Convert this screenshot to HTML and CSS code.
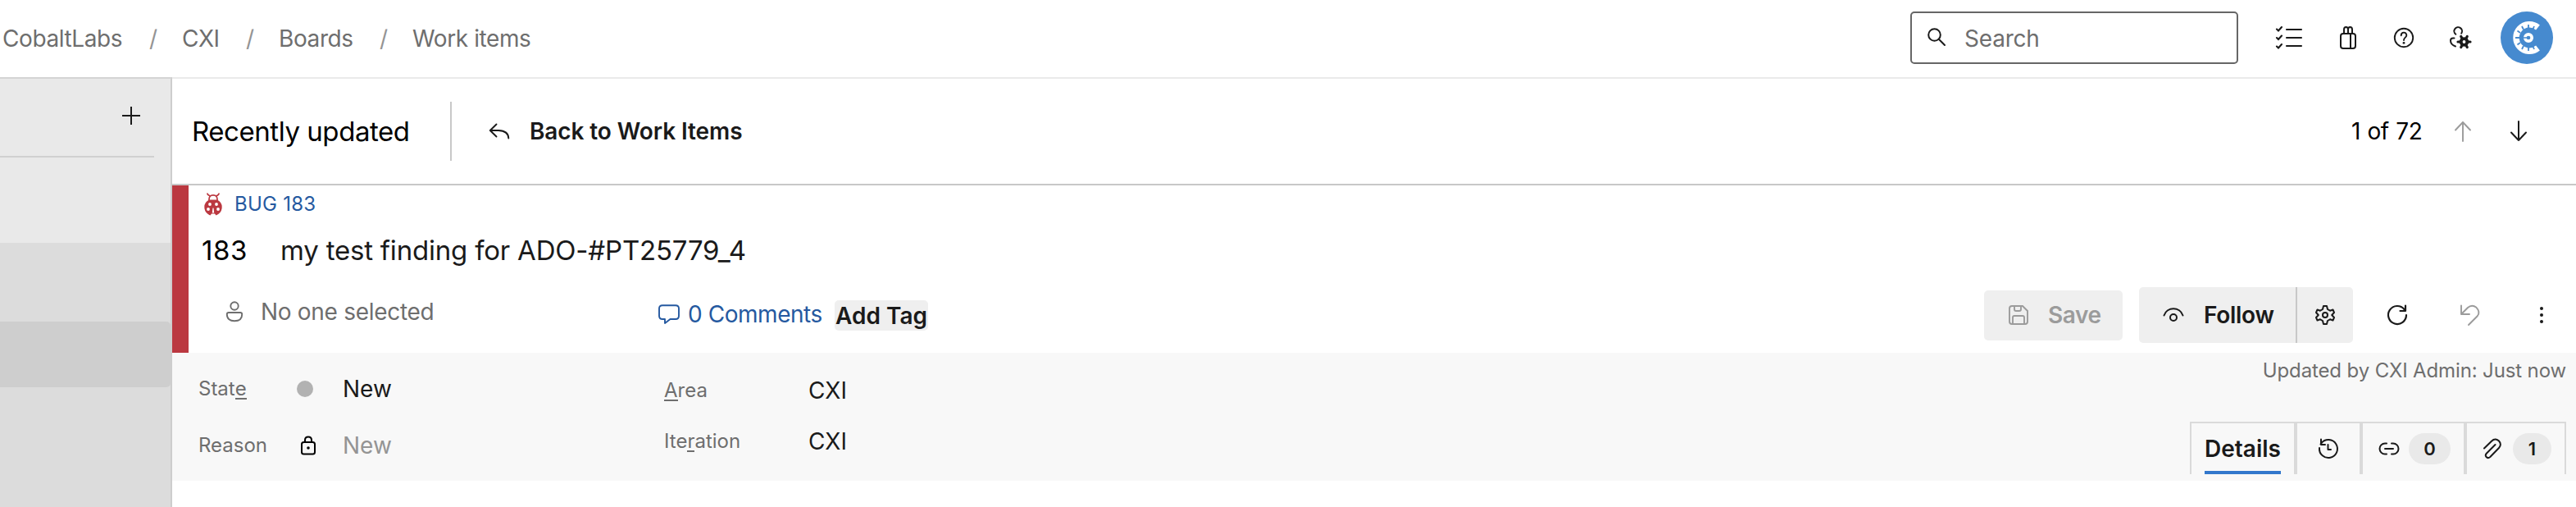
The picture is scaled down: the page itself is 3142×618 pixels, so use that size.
FILE: index.html
```html
<!DOCTYPE html>
<html lang="en">
<head>
<meta charset="utf-8">
<title>Bug 183</title>
<link rel="stylesheet" href="styles.css">
</head>
<body>
<header class="topbar">
  <nav class="crumbs">
    <a class="crumb crumb-org">CobaltLabs</a><span class="slash">/</span>
    <a class="crumb crumb-project">CXI</a><span class="slash">/</span>
    <a class="crumb crumb-hub">Boards</a><span class="slash">/</span>
    <a class="crumb crumb-page">Work items</a>
  </nav>
  <div class="search">
    <svg width="24" height="24" viewBox="0 0 24 24" fill="none" stroke="#1a1a1a" stroke-width="2" stroke-linecap="round"><circle cx="8.500" cy="8.500" r="7.300"/><path d="M13.800 13.800 21 21"/></svg>
    <span>Search</span>
  </div>
  <div class="top-icons">
    <svg class="ti-list" width="34" height="30" viewBox="0 0 34 30" fill="none" stroke="#1a1a1a" stroke-width="2.1" stroke-linecap="round"><path d="M2 4.5 4 6.5 8 2M2 15 4 17 8 12.500M2 25.500 4 27.500 8 23M14 5H32M14 15H32M14 25H32"/></svg>
    <svg class="ti-bag" width="22" height="30" viewBox="0 0 22 30" fill="none" stroke="#1a1a1a" stroke-width="2"><rect x="2" y="10" width="18" height="18" rx="3"/><path d="M14 10V28M6 10V5Q6 2 8.500 2Q11 2 11 5V10M11 5Q11 2 13.500 2Q16 2 16 5V10"/></svg>
    <svg class="ti-help" width="26" height="26" viewBox="0 0 26 26" fill="none" stroke="#1a1a1a" stroke-width="1.900"><circle cx="13" cy="13" r="11.200"/><path d="M9.700 10.200C9.700 5.500 16.300 5.500 16.300 10C16.300 12.700 13 12.700 13 16" stroke-linecap="round"/><circle cx="13" cy="19.300" r="1.400" fill="#1a1a1a" stroke="none"/></svg>
    <svg class="ti-user" width="28" height="28" viewBox="0 0 28 28" fill="none" stroke="#1a1a1a" stroke-width="2" stroke-linecap="round"><path d="M8.300 9.800A4.800 4.800 0 1 1 15.200 8.700M6.500 14.500H5Q2 14.500 2 17.500Q2 22.500 8 24.500"/><circle cx="18.500" cy="19" r="5.800" fill="#1a1a1a" stroke="none"/><path d="M11 19H26M14.750 12.500 22.250 25.500M22.250 12.500 14.750 25.500" stroke-width="3.200"/><circle cx="18.500" cy="19" r="1.900" fill="#fff" stroke="none"/></svg>
    <svg class="avatar" width="64" height="64" viewBox="0 0 64 64"><circle cx="32" cy="32" r="32" fill="#468acf"/><path d="M45.500 19.500A16.200 16.200 0 1 0 45.500 44.500" fill="none" stroke="#fff" stroke-width="7.500"/><path d="M34 16V20M26 18 28 22M20.500 23.500 24 26M18 32H23M20.500 40.500 24 38M26 46 28 42M34 48V44M41 18 39.500 21.500M41 46 39.500 42.500" stroke="#468acf" stroke-width="1.800"/><circle cx="34" cy="32" r="4.200" fill="none" stroke="#fff" stroke-width="3.700"/><path d="M28 32H32" stroke="#468acf" stroke-width="1.500"/></svg>
  </div>
</header>
<div class="shell">
  <aside class="sidebar">
    <div class="side-top">
      <svg width="24" height="24" viewBox="0 0 24 24" stroke="#1a1a1a" stroke-width="2"><path d="M1 12H23M12 1V23"/></svg>
    </div>
    <div class="side-links"></div>
    <div class="side-group"><div class="side-active"></div></div>
  </aside>
  <main class="main">
    <div class="listbar">
      <h1 class="list-title">Recently updated</h1>
      <a class="back">
        <svg width="26" height="20" viewBox="0 0 26 20" fill="none" stroke="#1a1a1a" stroke-width="1.900" stroke-linecap="round" stroke-linejoin="round"><path d="M9.500 1.500 1.800 9 9.500 16.500M2 9H12Q24 9.500 24.300 18.500"/></svg>
        <span class="back-text">Back to Work Items</span>
      </a>
      <span class="pager">1 of 72</span>
      <svg class="arrow" width="22" height="26" viewBox="0 0 22 26" fill="none" stroke="#9b9b9b" stroke-width="1.900" stroke-linecap="round" stroke-linejoin="round"><path d="M11 25V2M2 11.500 11 2 20 11.500"/></svg>
      <svg class="arrow arrow-down" width="22" height="26" viewBox="0 0 22 26" fill="none" stroke="#1a1a1a" stroke-width="2" stroke-linecap="round" stroke-linejoin="round"><path d="M11 1V24M2 14.500 11 24 20 14.500"/></svg>
    </div>
    <section class="item-head">
      <div class="kind">
        <svg width="22" height="28" viewBox="0 0 22 28"><path d="M4 1Q4 2.500 7.500 4M18 1Q18 2.500 14.500 4M6 9.500Q5.500 2.800 11 2.800Q16.500 2.800 16 9.500" fill="none" stroke="#bb3840" stroke-width="1.700" stroke-linecap="round"/><path d="M6 8.500H16Q21.700 11.500 21.700 17.300Q21.700 24.500 14.500 27.600L13 25.500H9L7.500 27.600Q.300 24.500 .300 17.300Q.300 11.500 6 8.500Z" fill="#bb3840"/><g fill="#fff"><circle cx="7" cy="14" r="1.900"/><circle cx="15" cy="14" r="1.900"/><circle cx="5" cy="20" r="1.900"/><circle cx="17" cy="20" r="1.900"/><path d="M10.500 18.500H11.500L12.200 24.500H9.800Z"/></g></svg>
        <a class="kind-text">BUG 183</a>
      </div>
      <div class="title-row"><span class="item-id">183</span><span class="item-title">my test finding for ADO-#PT25779_4</span></div>
      <div class="tools">
        <svg class="person" width="22" height="26" viewBox="0 0 22 26" fill="none" stroke="#6e6e6e" stroke-width="1.900"><circle cx="11" cy="6" r="4.700"/><path d="M4 14H18Q20.200 14 20.200 16.200C20.200 21.500 16.500 24.200 11 24.200S1.800 21.500 1.800 16.200Q1.800 14 4 14Z"/></svg>
        <span class="assignee">No one selected</span>
        <a class="comments">
          <svg width="26" height="24" viewBox="0 0 26 24" fill="none" stroke="#2559a0" stroke-width="1.900" stroke-linejoin="round"><path d="M5 1.200H21Q25 1.200 25 5V14Q25 18 21 18H14.500L8 23V18H5Q1 18 1 14V5Q1 1.200 5 1.200Z"/></svg>
          <span class="comments-text">0 Comments</span>
        </a>
        <button class="add-tag"><span>Add Tag</span></button>
        <button class="save">
          <svg width="24" height="24" viewBox="0 0 24 24" fill="none" stroke="#9b9b9b" stroke-width="1.900"><path d="M4 1H17L23 7V20Q23 23 20 23H4Q1 23 1 20V4Q1 1 4 1ZM7 1V5Q7 7 9 7H13Q15 7 15 5V1M5 23V15Q5 13 7 13H17Q19 13 19 15V23"/></svg>
          <span class="save-text">Save</span>
        </button>
        <div class="follow">
          <svg width="26" height="18" viewBox="0 0 26 18" fill="none" stroke="#1a1a1a" stroke-width="2" stroke-linecap="round"><path d="M1.500 9.500C5-1.500 21-1.500 24.500 9.500"/><circle cx="13" cy="12" r="4"/></svg>
          <span class="follow-text">Follow</span>
          <span class="follow-gear"><svg width="24" height="24" viewBox="0 0 24 24" fill="none" stroke="#1a1a1a" stroke-width="2" stroke-linejoin="round"><path d="M10 1H14L15 5 18 6.700 21.500 5.500 23 9 20.200 12 23 15 21.500 18.500 18 17.300 15 19 14 23H10L9 19 6 17.300 2.500 18.500 1 15 3.800 12 1 9 2.500 5.500 6 6.700 9 5Z"/><circle cx="12" cy="12" r="3"/></svg></span>
        </div>
        <svg class="refresh" width="26" height="26" viewBox="0 0 26 26" fill="none" stroke="#1a1a1a" stroke-width="2.200" stroke-linecap="round" stroke-linejoin="round"><path d="M24 13A11 11 0 1 1 21.500 6L23 7.800M23 1.500V8H16.500"/></svg>
        <svg class="undo" width="26" height="26" viewBox="0 0 26 26" fill="none" stroke="#9b9b9b" stroke-width="1.900" stroke-linecap="round" stroke-linejoin="round"><path d="M2 1.500V12H12M2 12 10 4Q15-.500 20.500 3.800Q26 9.500 21.500 14.500L11 25"/></svg>
        <svg class="more" width="6" height="22" viewBox="0 0 6 22" fill="#1a1a1a"><circle cx="3" cy="3" r="2"/><circle cx="3" cy="11" r="2"/><circle cx="3" cy="19" r="2"/></svg>
      </div>
    </section>
    <section class="fields">
      <div class="field-col">
        <div class="field field-state"><label>Stat<u>e</u></label><i class="dot"></i><span class="value state-value">New</span></div>
        <div class="field field-reason"><label>Reason</label><svg class="lock" width="20" height="24" viewBox="0 0 20 24" fill="none" stroke="#000" stroke-width="2"><rect x="2" y="8" width="16" height="14.500" rx="2.500"/><path d="M6 8V5.500Q6 1.500 10 1.500Q14 1.500 14 5.500V8"/><circle cx="10" cy="15" r="1.800" fill="#000" stroke="none"/></svg><span class="value muted state-value">New</span></div>
      </div>
      <div class="field-col field-col-area">
        <div class="field field-area"><label><u>A</u>rea</label><span class="value">CXI</span></div>
        <div class="field field-iter"><label>Ite<u>r</u>ation</label><span class="value">CXI</span></div>
      </div>
      <div class="meta">
        <div class="updated">Updated by CXI Admin: Just now</div>
        <div class="tabs">
          <a class="tab tab-details"><span>Details</span></a>
          <a class="tab tab-history"><svg width="26" height="26" viewBox="0 0 26 26" fill="none" stroke="#1a1a1a" stroke-width="2" stroke-linecap="round" stroke-linejoin="round"><path d="M2 12A11 11 0 1 0 4.500 6L3.500 7.500M4 1.500V8H9M12.500 8V14H16"/></svg></a>
          <a class="tab tab-links"><svg width="26" height="16" viewBox="0 0 26 16" fill="none" stroke="#1a1a1a" stroke-width="2" stroke-linecap="round"><path d="M10 1.500H8A6.500 6.500 0 0 0 8 14.500H10M16 1.500H18A6.500 6.500 0 0 1 18 14.500H16M8 8H18"/></svg><b class="badge">0</b></a>
          <a class="tab tab-files"><svg width="24" height="26" viewBox="0 0 24 26" fill="none" stroke="#1a1a1a" stroke-width="2" stroke-linecap="round" stroke-linejoin="round"><path d="M2 12.500 11 3.700C14.500 .300 18 1.500 20 3.500C22.500 6 22.500 9.500 20 12L9.300 23C5.500 26 2 21.500 5 18.500L15.500 8"/></svg><b class="badge badge-files">1</b></a>
        </div>
      </div>
    </section>
  </main>
</div>
</body>
</html>
```
FILE: styles.css
```css
* { box-sizing: border-box; }
body {
  margin: 0;
  height: 618px;
  overflow: hidden;
  background: #fff;
  color: #1a1a1a;
  font-family: Inter, "Liberation Sans", sans-serif;
  font-size: 28px;
  line-height: 36px;
  white-space: nowrap;
}
svg { display: block; flex: none; overflow: visible; }
button { border: 0; padding: 0; font: inherit; font-weight: 600; color: inherit; }

/* Top bar */
.topbar { display: flex; align-items: center; height: 96px; padding-bottom: 2px; border-bottom: 2px solid #eaeaea; }
.crumbs { display: flex; flex: 1; color: #6e6e6e; padding: 2px 0 0 3px; letter-spacing: -0.4px; }
.crumb-org { width: 179px; }
.crumb-project { width: 78px; }
.crumb-hub { width: 123px; }
.slash { width: 40px; color: #949494; }
.search { display: flex; align-items: center; width: 400px; height: 64px; border: 2px solid #666; border-radius: 5px; padding-left: 19px; gap: 21px; color: #6e6e6e; }
.search span { padding-top: 2px; letter-spacing: -0.2px; }
.top-icons { display: flex; align-items: center; padding-right: 28px; }
.ti-list { margin-left: 45px; }
.ti-bag { margin-left: 44px; }
.ti-help { margin-left: 44px; }
.ti-user { margin-left: 42px; }
.avatar { margin-left: 35px; }

.shell { display: flex; height: 522px; }

/* Sidebar */
.sidebar { width: 210px; flex: none; border-right: 2px solid #cdcdcd; background: #e9e9e9; margin-top: -2px; border-top: 2px solid #d4d4d4; display: flex; flex-direction: column; }
.side-top { height: 96px; width: 188px; border-bottom: 2px solid #d0d0d0; padding: 33px 0 0 148px; }
.side-links { height: 104px; }
.side-group { flex: 1; background: #dcdcdc; padding-top: 96px; }
.side-active { height: 80px; background: #cecece; border-radius: 0 5px 5px 0; }

.main { flex: 1; }

/* List bar */
.listbar { display: flex; align-items: center; height: 130px; border-bottom: 2px solid #c8c8c8; padding-right: 59px; }
.list-title { margin: 0 0 0 24px; width: 315px; font-size: 33px; font-weight: 400; line-height: 44px; letter-spacing: -0.45px; color: #000; }
.back { display: flex; align-items: center; flex: 1; height: 72px; border-left: 2px solid #c8c8c8; padding-left: 45px; gap: 24px; font-weight: 600; letter-spacing: -0.1px; }
.pager { width: 125px; color: #000; letter-spacing: -0.4px; word-spacing: 1px; }
.arrow-down { margin-left: 46px; }

/* Work item header */
.item-head { height: 204px; border-left: 20px solid #bb3840; }
.kind { display: flex; align-items: center; height: 46px; padding-left: 19px; gap: 15px; font-size: 24px; letter-spacing: 0.25px; color: #2559a0; }
.title-row { display: flex; align-items: center; height: 66px; font-size: 33px; line-height: 44px; }
.item-id { width: 97px; padding-left: 16px; color: #000; letter-spacing: 0.6px; }
.item-title { padding-left: 15px; letter-spacing: -0.2px; }
.tools { display: flex; align-items: center; height: 92px; }
.person { margin: -8px 0 0 45px; }
.assignee { margin: -8px 0 0 21px; width: 485px; color: #6e6e6e; letter-spacing: -0.3px; }
.comments { display: flex; align-items: center; width: 215px; gap: 10px; color: #2559a0; margin-top: -3px; letter-spacing: -0.45px; }
.add-tag { width: 114px; height: 37px; background: #efefef; border-radius: 5px; line-height: 39px; }
.save { display: flex; align-items: center; width: 169px; height: 61px; margin-left: auto; padding-left: 30px; gap: 24px; background: #efefef; border-radius: 5px; color: #9b9b9b; letter-spacing: -0.4px; }
.follow { display: flex; align-items: center; width: 261px; height: 68px; margin-left: 20px; padding-left: 29px; gap: 24px; background: #efefef; border-radius: 5px; font-weight: 600; letter-spacing: -0.3px; }
.follow-gear { display: flex; align-items: center; height: 68px; margin-left: auto; padding: 0 22px; border-left: 2px solid #c8c8c8; }
.refresh { margin-left: 41px; }
.undo { margin-left: 63px; }
.more { margin: 0 39px 0 71px; }

/* Fields */
.fields { display: flex; height: 156px; background: #f8f8f8; padding-left: 32px; }
.field-col { width: 568px; }
.field { display: flex; align-items: center; height: 36px; }
.field label { width: 120px; font-size: 24px; color: #6e6e6e; }
.field u { text-decoration: none; display: inline-block; height: 27px; line-height: 27px; border-bottom: 2px solid #6e6e6e; }
.field-state { margin-top: 26px; }
.dot { width: 20px; height: 20px; border-radius: 50%; background: #b2b2b2; }
.state-value { margin-left: 36px; }
.field-reason { margin-top: 33px; }
.lock { margin-left: 4px; }
.field-reason .state-value { margin-left: 32px; }
.muted { color: #949494; }
.field-col-area label { width: 176px; }
.field-area { margin-top: 28px; }
.field-iter { margin-top: 26px; }
.meta { display: flex; flex-direction: column; align-items: flex-end; margin-left: auto; padding-right: 12px; }
.updated { font-size: 24px; line-height: 36px; color: #6e6e6e; margin-top: 4px; letter-spacing: -0.13px; }
.tabs { display: flex; width: 459px; height: 64px; margin-top: 44px; border: 2px solid #dadada; border-bottom: 0; font-weight: 600; }
.tab { display: flex; align-items: center; border-right: 4px solid #dadada; }
.tab-details { width: 129px; padding-left: 16px; }
.tab-details span { width: 93px; height: 62px; line-height: 62px; border-bottom: 4px solid #3277cc; }
.tab-history { width: 80px; padding: 0 0 0 25px; }
.tab-links { width: 127px; padding-left: 19px; gap: 11px; }
.tab-files { flex: 1; border-right: 0; padding-left: 19px; gap: 13px; }
.badge { width: 51px; height: 38px; border-radius: 19px; background: #e9e9e9; font-size: 22px; font-weight: 600; line-height: 38px; text-align: center; }
.badge-files { width: 47px; }
```
